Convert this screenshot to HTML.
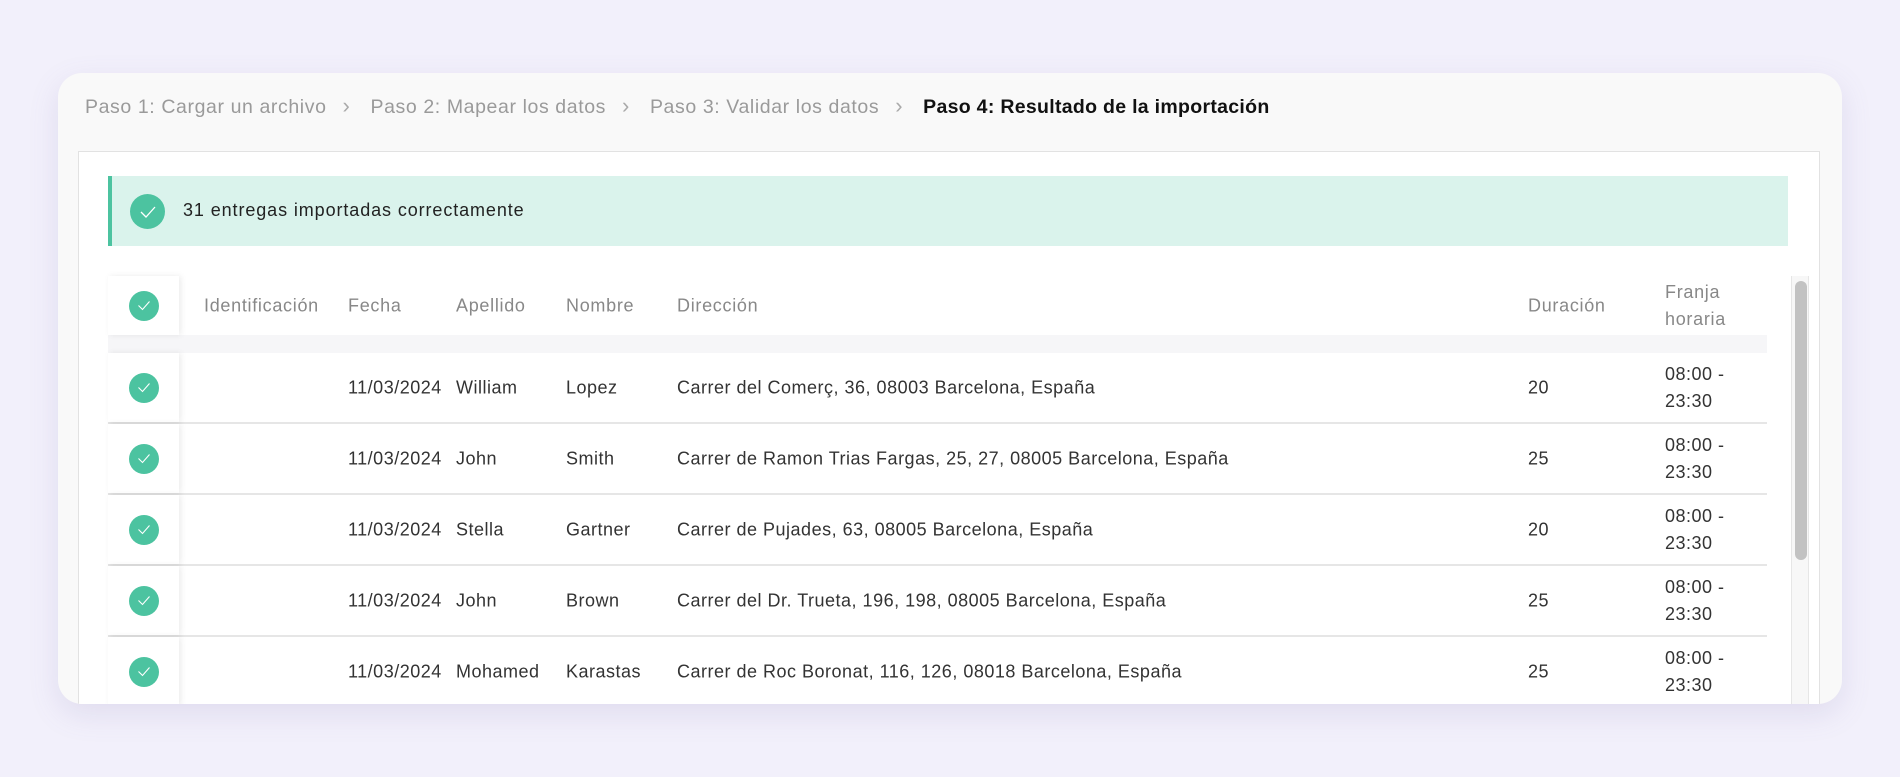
<!DOCTYPE html>
<html><head><meta charset="utf-8"><style>
*{box-sizing:border-box;margin:0;padding:0}
body{width:1900px;height:777px;background:#f2f0fb;font-family:"Liberation Sans",sans-serif;position:relative;overflow:hidden}
.card{position:absolute;left:58px;top:73px;width:1784px;height:631px;background:#f9f9f9;border-radius:24px;overflow:hidden;box-shadow:0 10px 30px rgba(120,110,170,.15)}
.bc{position:absolute;left:27px;top:20px;font-size:19.5px;color:#9a9a9a;white-space:nowrap;letter-spacing:0.6px}
.bc .sep{color:#aaa;margin:0 20px 0 16px;font-size:22px}
.bc b{color:#111;font-weight:bold;letter-spacing:0.3px}
.panel{position:absolute;left:20px;top:78px;width:1742px;height:600px;background:#fff;border:1px solid #e2e2e2}
.banner{position:absolute;left:50px;top:103px;width:1680px;height:70px;background:#daf3ec;border-left:4px solid #4cc3a0}
.banner .ic{position:absolute;left:18px;top:18px}
.banner .t{position:absolute;left:71px;top:24px;font-size:18px;color:#222;letter-spacing:0.9px}
.chk{width:30px;height:30px;border-radius:50%;background:#4cc3a0;display:flex;align-items:center;justify-content:center}
.tbl{position:absolute;left:50px;top:203px;width:1659px}
.row{position:relative;height:71px;background:#fff;border-bottom:2px solid #e6e6e6;font-size:18px;color:#333;letter-spacing:0.5px}
.hdr{height:59px;color:#888;border-bottom:none;margin-bottom:18px;letter-spacing:0.7px}
.gap{position:absolute;left:50px;top:262px;width:1659px;height:18px;background:#f6f6f8}
.cc{position:absolute;left:0;top:0;width:71px;height:100%;background:#fff;box-shadow:2px 0 6px rgba(0,0,0,.08);display:flex;align-items:center;justify-content:center}
.c{position:absolute;top:50%;transform:translateY(-50%);white-space:nowrap;line-height:27px}
</style></head><body>
<div class="card">
<div class="bc"><span>Paso 1: Cargar un archivo</span><span class="sep">›</span><span>Paso 2: Mapear los datos</span><span class="sep">›</span><span>Paso 3: Validar los datos</span><span class="sep">›</span><b>Paso 4: Resultado de la importación</b></div>
<div class="panel"></div>
<div class="banner"><div class="ic"><div class="chk" style="width:35px;height:35px"><svg width="18" height="14" viewBox="0 0 18 14"><path d="M2 7l5 5 9-10" fill="none" stroke="#fff" stroke-width="1.3"/></svg></div></div><div class="t">31 entregas importadas correctamente</div></div>
<div class="gap"></div>
<div class="tbl">
<div class="row hdr"><div class="cc"><div class="chk"><svg width="14" height="11" viewBox="0 0 14 11"><path d="M1.5 5.5l4 4 7-8" fill="none" stroke="#fff" stroke-width="1.1"/></svg></div></div>
<div class="c" style="left:96px">Identificación</div><div class="c" style="left:240px">Fecha</div><div class="c" style="left:348px">Apellido</div><div class="c" style="left:458px">Nombre</div><div class="c" style="left:569px">Dirección</div><div class="c" style="left:1420px">Duración</div><div class="c" style="left:1557px">Franja<br>horaria</div></div>
<div class="row"><div class="cc"><div class="chk"><svg width="14" height="11" viewBox="0 0 14 11"><path d="M1.5 5.5l4 4 7-8" fill="none" stroke="#fff" stroke-width="1.1"/></svg></div></div><div class="c" style="left:240px">11/03/2024</div><div class="c" style="left:348px">William</div><div class="c" style="left:458px">Lopez</div><div class="c" style="left:569px">Carrer del Comerç, 36, 08003 Barcelona, España</div><div class="c" style="left:1420px">20</div><div class="c" style="left:1557px">08:00 -<br>23:30</div></div>
<div class="row"><div class="cc"><div class="chk"><svg width="14" height="11" viewBox="0 0 14 11"><path d="M1.5 5.5l4 4 7-8" fill="none" stroke="#fff" stroke-width="1.1"/></svg></div></div><div class="c" style="left:240px">11/03/2024</div><div class="c" style="left:348px">John</div><div class="c" style="left:458px">Smith</div><div class="c" style="left:569px">Carrer de Ramon Trias Fargas, 25, 27, 08005 Barcelona, España</div><div class="c" style="left:1420px">25</div><div class="c" style="left:1557px">08:00 -<br>23:30</div></div>
<div class="row"><div class="cc"><div class="chk"><svg width="14" height="11" viewBox="0 0 14 11"><path d="M1.5 5.5l4 4 7-8" fill="none" stroke="#fff" stroke-width="1.1"/></svg></div></div><div class="c" style="left:240px">11/03/2024</div><div class="c" style="left:348px">Stella</div><div class="c" style="left:458px">Gartner</div><div class="c" style="left:569px">Carrer de Pujades, 63, 08005 Barcelona, España</div><div class="c" style="left:1420px">20</div><div class="c" style="left:1557px">08:00 -<br>23:30</div></div>
<div class="row"><div class="cc"><div class="chk"><svg width="14" height="11" viewBox="0 0 14 11"><path d="M1.5 5.5l4 4 7-8" fill="none" stroke="#fff" stroke-width="1.1"/></svg></div></div><div class="c" style="left:240px">11/03/2024</div><div class="c" style="left:348px">John</div><div class="c" style="left:458px">Brown</div><div class="c" style="left:569px">Carrer del Dr. Trueta, 196, 198, 08005 Barcelona, España</div><div class="c" style="left:1420px">25</div><div class="c" style="left:1557px">08:00 -<br>23:30</div></div>
<div class="row"><div class="cc"><div class="chk"><svg width="14" height="11" viewBox="0 0 14 11"><path d="M1.5 5.5l4 4 7-8" fill="none" stroke="#fff" stroke-width="1.1"/></svg></div></div><div class="c" style="left:240px">11/03/2024</div><div class="c" style="left:348px">Mohamed</div><div class="c" style="left:458px">Karastas</div><div class="c" style="left:569px">Carrer de Roc Boronat, 116, 126, 08018 Barcelona, España</div><div class="c" style="left:1420px">25</div><div class="c" style="left:1557px">08:00 -<br>23:30</div></div>
</div>
</div>
<div style="position:absolute;left:58px;top:73px;width:1784px;height:631px;border-radius:24px;overflow:hidden;pointer-events:none">
<div style="position:absolute;left:1733px;top:203px;width:18px;height:430px;background:#f7f7f7;border-left:1px solid #e6e6e6;border-right:1px solid #e6e6e6"></div>
<div style="position:absolute;left:1737px;top:208px;width:12px;height:279px;border-radius:6px;background:#c2c2c2"></div>
</div>
</body></html>
